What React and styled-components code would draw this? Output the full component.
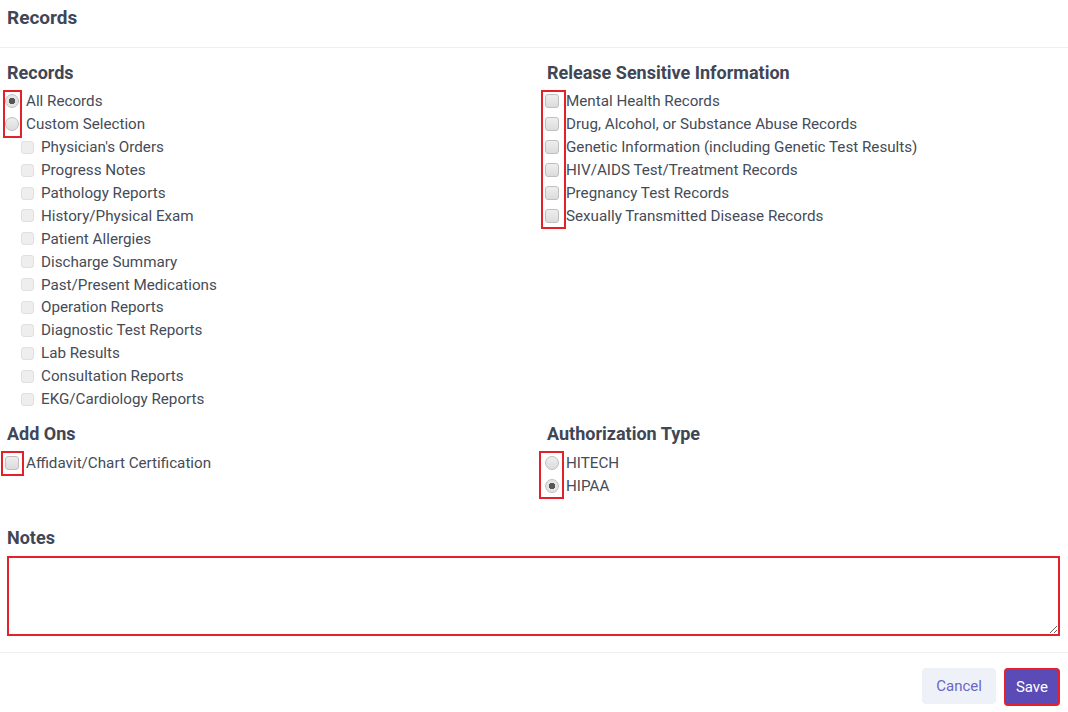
import React, { useState } from 'react';
import styled, { createGlobalStyle } from 'styled-components';

const GlobalStyle = createGlobalStyle`
  body {
    margin: 0;
    background: #ffffff;
    font-family: Roboto, "Liberation Sans", Arial, sans-serif;
    color: #454b57;
  }
  * { box-sizing: border-box; }
`;

const Header = styled.div`
  height: 48px;
  padding: 7px 7px 0;
  border-bottom: 1px solid #eceef2;
`;

const Title = styled.h2`
  margin: 0;
  font-size: 19px;
  line-height: 22px;
  font-weight: 700;
  color: #3f4656;
`;

const Body = styled.div`
  padding: 14px 8px 0 7px;
`;

const Columns = styled.div`
  display: grid;
  grid-template-columns: 540px 1fr;
  row-gap: 13px;
`;

const Section = styled.section`
  display: flex;
  flex-direction: column;
  gap: 6px;
`;

const Heading = styled.h3`
  margin: 0;
  font-size: 18px;
  line-height: 22px;
  font-weight: 700;
  color: #3f4656;
`;

const OptionList = styled.div`
  position: relative;
  display: flex;
  flex-direction: column;
`;

const Marker = styled.span`
  position: absolute;
  top: 0;
  bottom: -2px;
  left: ${p => p.$left}px;
  width: ${p => p.$width}px;
  border: 2px solid #e3212b;
  pointer-events: none;
`;

const Option = styled.label`
  display: flex;
  align-items: center;
  height: 22.9px;
  padding-left: ${p => (p.$sub ? 14 : 0)}px;
  font-size: 15.2px;
  color: #454b57;
  cursor: pointer;
`;

const Control = styled.input`
  appearance: none;
  flex: none;
  width: 14px;
  height: 14px;
  margin: 0 7px 0 -2px;
  border: 1px solid #bfbfbf;
  background: linear-gradient(#eeeeee, #dcdcdc);
  border-radius: ${p => (p.type === 'radio' ? '50%' : '3px')};
  &:checked {
    background: ${p =>
      p.type === 'radio'
        ? 'radial-gradient(circle, #555 0 3px, #e4e4e4 3.5px)'
        : 'linear-gradient(#eeeeee, #dcdcdc)'};
  }
`;

const SubControl = styled(Control)`
  width: 13px;
  height: 13px;
  margin: 0 7px 0 0;
  border-color: #e0e0e0;
  background: #eeeeee;
`;

const NotesSection = styled(Section)`
  margin-top: 30px;
  gap: 7px;
`;

const NotesArea = styled.textarea`
  display: block;
  width: 100%;
  height: 80px;
  border: 2px solid #e3212b;
  border-radius: 0;
  padding: 8px;
  font: inherit;
  font-size: 14px;
  resize: vertical;
  outline: none;
`;

const Footer = styled.div`
  margin-top: 16px;
  border-top: 1px solid #eceef2;
  padding: 15px 8px 0;
  display: flex;
  justify-content: flex-end;
  gap: 8px;
`;

const Button = styled.button`
  height: ${p => (p.$primary ? 38 : 36)}px;
  padding: 0 ${p => (p.$primary ? 10 : 13)}px;
  border-radius: 4px;
  font-family: inherit;
  font-size: 15px;
  cursor: pointer;
  border: ${p => (p.$primary ? '2px solid #e3212b' : '1px solid #eef0f8')};
  background: ${p => (p.$primary ? '#5a4bb7' : '#eff1f9')};
  color: ${p => (p.$primary ? '#ffffff' : '#6b67c4')};
`;

const subRecords = [
  "Physician's Orders",
  'Progress Notes',
  'Pathology Reports',
  'History/Physical Exam',
  'Patient Allergies',
  'Discharge Summary',
  'Past/Present Medications',
  'Operation Reports',
  'Diagnostic Test Reports',
  'Lab Results',
  'Consultation Reports',
  'EKG/Cardiology Reports',
];

const sensitive = [
  'Mental Health Records',
  'Drug, Alcohol, or Substance Abuse Records',
  'Genetic Information (including Genetic Test Results)',
  'HIV/AIDS Test/Treatment Records',
  'Pregnancy Test Records',
  'Sexually Transmitted Disease Records',
];

export default function App() {
  const [scope, setScope] = useState('all');
  const [auth, setAuth] = useState('hipaa');

  return (
    <>
      <GlobalStyle />
      <Header>
        <Title>Records</Title>
      </Header>
      <Body>
        <Columns>
          <Section>
            <Heading>Records</Heading>
            <OptionList>
              <OptionList>
                <Marker $left={-4} $width={19} />
                <Option>
                  <Control type="radio" name="scope" checked={scope === 'all'} onChange={() => setScope('all')} />
                  All Records
                </Option>
                <Option>
                  <Control type="radio" name="scope" checked={scope === 'custom'} onChange={() => setScope('custom')} />
                  Custom Selection
                </Option>
              </OptionList>
              {subRecords.map(item => (
                <Option key={item} $sub>
                  <SubControl type="checkbox" disabled={scope === 'all'} />
                  {item}
                </Option>
              ))}
            </OptionList>
          </Section>

          <Section>
            <Heading>Release Sensitive Information</Heading>
            <OptionList>
              <Marker $left={-6} $width={25} />
              {sensitive.map(item => (
                <Option key={item}>
                  <Control type="checkbox" />
                  {item}
                </Option>
              ))}
            </OptionList>
          </Section>

          <Section>
            <Heading>Add Ons</Heading>
            <OptionList>
              <Marker $left={-6} $width={23} />
              <Option>
                <Control type="checkbox" />
                Affidavit/Chart Certification
              </Option>
            </OptionList>
          </Section>

          <Section>
            <Heading>Authorization Type</Heading>
            <OptionList>
              <Marker $left={-8} $width={25} />
              <Option>
                <Control type="radio" name="auth" checked={auth === 'hitech'} onChange={() => setAuth('hitech')} />
                HITECH
              </Option>
              <Option>
                <Control type="radio" name="auth" checked={auth === 'hipaa'} onChange={() => setAuth('hipaa')} />
                HIPAA
              </Option>
            </OptionList>
          </Section>
        </Columns>

        <NotesSection>
          <Heading>Notes</Heading>
          <NotesArea />
        </NotesSection>
      </Body>
      <Footer>
        <Button>Cancel</Button>
        <Button $primary>Save</Button>
      </Footer>
    </>
  );
}
